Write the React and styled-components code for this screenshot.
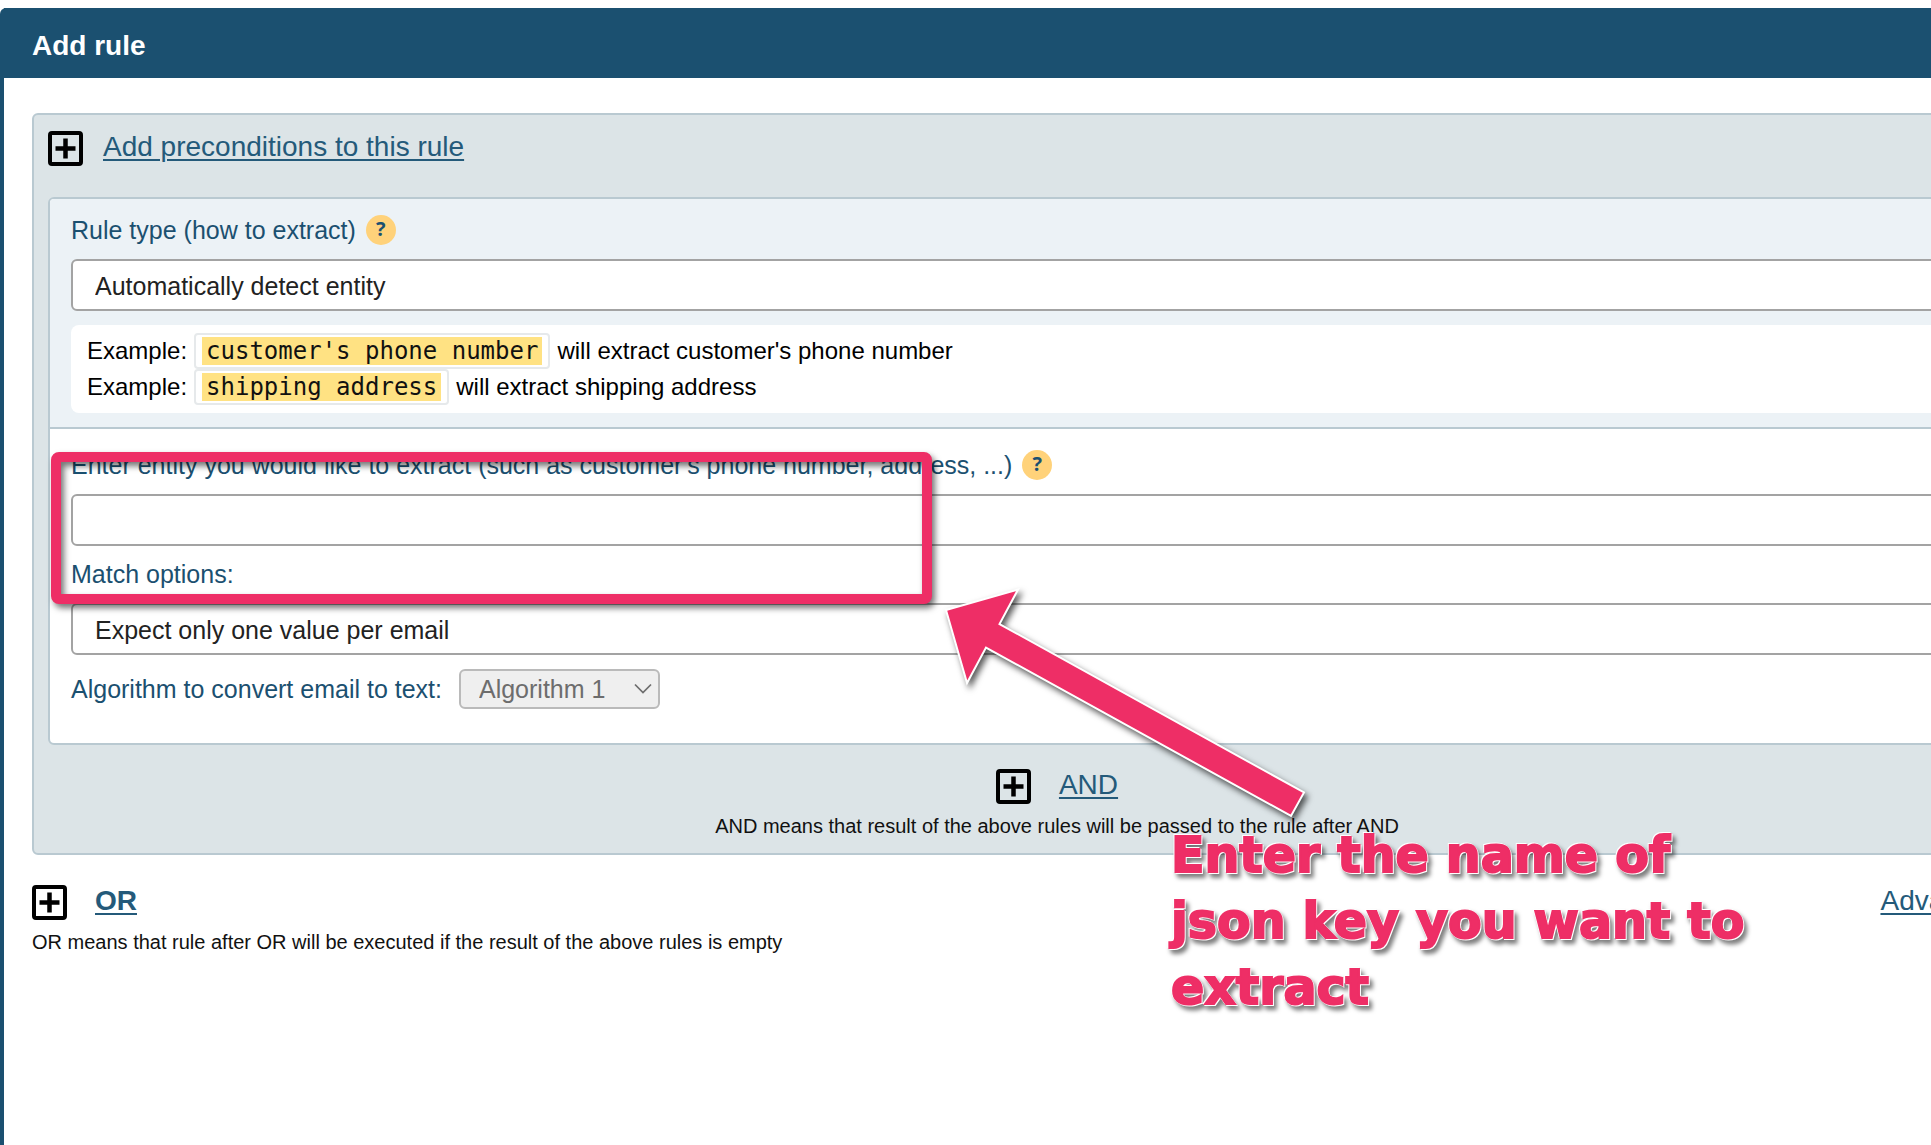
import React from 'react';
import styled, { createGlobalStyle } from 'styled-components';

const colors = {
  primary: '#1b5070',
  link: '#245a7a',
  border: '#b9c9d1',
  panel: '#dce4e7',
  section: '#ecf2f6',
  field: '#a3a3a3',
  badge: '#ffd27a',
  mark: '#ffe283',
  accent: '#ee2e66',
};

const GlobalStyle = createGlobalStyle`
  *, *::before, *::after {
    box-sizing: border-box;
  }

  body {
    margin: 0;
    background: #fff;
    color: #111;
    font-family: 'Liberation Sans', Arial, Helvetica, sans-serif;
    overflow: hidden;
  }
`;

const Page = styled.div`
  position: relative;
  min-height: 100vh;
  padding-top: 8px;
  display: flex;
  overflow: hidden;
`;

// the dialog runs past the right edge of the window
const Dialog = styled.main`
  flex: 1;
  margin-right: -183px;
  border-left: 4px solid ${colors.primary};
  border-top-left-radius: 6px;
`;

const Header = styled.header`
  display: flex;
  align-items: center;
  height: 70px;
  padding: 6px 28px 0;
  background: ${colors.primary};
`;

const Title = styled.h1`
  margin: 0;
  color: #fff;
  font-size: 28px;
  line-height: 32px;
`;

const Body = styled.div`
  padding: 35px 32px 35px 28px;
`;

const Group = styled.section`
  padding: 16px 14px 15px;
  background: ${colors.panel};
  border: 2px solid ${colors.border};
  border-radius: 6px;
`;

const ActionRow = styled.div`
  display: flex;
  align-items: flex-start;
  justify-content: ${(props) => (props.$center ? 'center' : 'flex-start')};
  gap: ${(props) => props.$gap || 28}px;
`;

const IconButton = styled.button`
  display: block;
  width: 35px;
  height: 35px;
  padding: 0;
  border: 0;
  background: none;
  color: #000;

  svg {
    display: block;
  }
`;

const Link = styled.a`
  color: ${colors.link};
  font-size: 28px;
  font-weight: ${(props) => (props.$bold ? 'bold' : 'normal')};
  line-height: 32px;
  text-decoration-thickness: 2px;
  text-underline-offset: 3px;
`;

const Hint = styled.p`
  margin: 10px 0 0;
  font-size: 20px;
  line-height: 24px;
  text-align: ${(props) => (props.$center ? 'center' : 'left')};
`;

const Rule = styled.div`
  margin: 31px 0 24px;
  background: #fff;
  border: 2px solid ${colors.border};
  border-radius: 6px;
  overflow: hidden;
`;

const RuleType = styled.div`
  padding: 15px 21px 14px;
  background: ${colors.section};
  border-bottom: 2px solid ${colors.border};
`;

const RuleOptions = styled.div`
  padding: 20px 21px 34px;
`;

const LabelRow = styled.div`
  display: flex;
  align-items: center;
  gap: 10px;
  height: 32px;
  margin-bottom: 13px;
`;

const Label = styled.label`
  color: ${colors.primary};
  font-size: 25px;
  line-height: 32px;
`;

const Help = styled.button`
  width: 30px;
  height: 30px;
  padding: 0 0 2px;
  border: 0;
  border-radius: 50%;
  background: ${colors.badge};
  color: ${colors.primary};
  font: bold 20px/28px 'Open Sans', sans-serif;
`;

const TextInput = styled.input`
  display: block;
  width: 100%;
  height: 52px;
  margin-bottom: 12px;
  padding: 0 22px;
  background: #fff;
  border: 2px solid ${colors.field};
  border-radius: 6px;
  font: 25px 'Liberation Sans', Arial, sans-serif;
`;

const SelectBox = styled.div`
  display: grid;
  align-items: center;

  > * {
    grid-area: 1 / 1;
  }

  svg {
    justify-self: end;
    margin-right: 8px;
    pointer-events: none;
  }
`;

const Select = styled.select`
  appearance: none;
  width: 100%;
  height: ${(props) => (props.$small ? 40 : 52)}px;
  padding: ${(props) => (props.$small ? '0 52px 0 18px' : '2px 22px 0')};
  background: #fff;
  border: 2px solid ${colors.field};
  border-radius: 6px;
  color: #222;
  font: 25px 'Liberation Sans', Arial, sans-serif;

  &:disabled {
    background: #efefef;
    border-color: #bababa;
    color: #6d6d6d;
    opacity: 1;
  }
`;

const Examples = styled.div`
  margin-top: 14px;
  padding: 8px 16px;
  background: #fff;
  border-radius: 8px;
`;

const Example = styled.div`
  display: flex;
  align-items: center;
  gap: 7px;
  height: 36px;
  color: #000;
  font-size: 24px;
`;

const Code = styled.code`
  padding: 2px 6px;
  border: 2px solid #e6e9eb;
  border-radius: 4px;
  font: 24px/28px 'DejaVu Sans Mono', monospace;

  mark {
    display: block;
    padding: 0 4px;
    background: ${colors.mark};
    color: #111;
  }
`;

const AlgorithmRow = styled.div`
  display: flex;
  align-items: center;
  gap: 17px;
  margin-top: 14px;
`;

const Footer = styled.footer`
  display: flex;
  align-items: flex-start;
  justify-content: space-between;
  margin-top: 30px;
  padding-right: 77px;
`;

const Highlight = styled.div`
  position: absolute;
  left: 51px;
  top: 452px;
  width: 881px;
  height: 152px;
  border: 10px solid ${colors.accent};
  border-radius: 8px;
  filter: drop-shadow(3px 4px 3px rgba(0, 0, 0, 0.55));
  pointer-events: none;
`;

const Arrow = styled.svg`
  position: absolute;
  left: 940px;
  top: 580px;
  overflow: visible;
  filter: drop-shadow(3px 4px 3px rgba(0, 0, 0, 0.65));
  pointer-events: none;
`;

const Callout = styled.p`
  position: absolute;
  left: 1171px;
  top: 823px;
  width: 620px;
  margin: 0;
  color: ${colors.accent};
  font: bold 49px/66px 'DejaVu Sans', Verdana, sans-serif;
  -webkit-text-stroke: 2px ${colors.accent};
  filter: drop-shadow(1px 1px 0 #fff) drop-shadow(-1px -1px 0 #fff)
    drop-shadow(3px 4px 2px rgba(0, 0, 0, 0.5));
`;

const PlusButton = ({ label }) => (
  <IconButton type="button" aria-label={label}>
    <svg width="35" height="35" viewBox="0 0 35 35" fill="none" stroke="currentColor">
      <rect x="2" y="2" width="31" height="31" rx="2" strokeWidth="4" />
      <path d="M17.5 7.5v20M7.5 17.5h20" strokeWidth="4.5" />
    </svg>
  </IconButton>
);

const Chevron = () => (
  <svg width="18" height="12" viewBox="0 0 18 12" fill="none" stroke="#6d6d6d" strokeWidth="1.75">
    <path d="M1 1.5l8 8 8-8" />
  </svg>
);

const examples = [
  { value: "customer's phone number", text: "will extract customer's phone number" },
  { value: 'shipping address', text: 'will extract shipping address' },
];

const App = () => (
  <>
    <GlobalStyle />
    <Page>
      <Dialog>
        <Header>
          <Title>Add rule</Title>
        </Header>
        <Body>
          <Group>
            <ActionRow $gap={20}>
              <PlusButton label="Add preconditions" />
              <Link href="#preconditions">Add preconditions to this rule</Link>
            </ActionRow>
            <Rule>
              <RuleType>
                <LabelRow>
                  <Label htmlFor="rule-type">Rule type (how to extract)</Label>
                  <Help type="button">?</Help>
                </LabelRow>
                <SelectBox>
                  <Select id="rule-type">
                    <option>Automatically detect entity</option>
                  </Select>
                  <Chevron />
                </SelectBox>
                <Examples>
                  {examples.map(({ value, text }) => (
                    <Example key={value}>
                      <span>Example:</span>
                      <Code>
                        <mark>{value}</mark>
                      </Code>
                      <span>{text}</span>
                    </Example>
                  ))}
                </Examples>
              </RuleType>
              <RuleOptions>
                <LabelRow>
                  <Label htmlFor="entity">
                    Enter entity you would like to extract (such as customer's phone number,
                    address, ...)
                  </Label>
                  <Help type="button">?</Help>
                </LabelRow>
                <TextInput id="entity" type="text" />
                <LabelRow>
                  <Label htmlFor="match">Match options:</Label>
                </LabelRow>
                <SelectBox>
                  <Select id="match">
                    <option>Expect only one value per email</option>
                  </Select>
                  <Chevron />
                </SelectBox>
                <AlgorithmRow>
                  <Label htmlFor="algorithm">Algorithm to convert email to text:</Label>
                  <SelectBox>
                    <Select id="algorithm" $small disabled>
                      <option>Algorithm 1</option>
                    </Select>
                    <Chevron />
                  </SelectBox>
                </AlgorithmRow>
              </RuleOptions>
            </Rule>
            <ActionRow $center>
              <PlusButton label="Add AND rule" />
              <Link href="#and">AND</Link>
            </ActionRow>
            <Hint $center>
              AND means that result of the above rules will be passed to the rule after AND
            </Hint>
          </Group>
          <Footer>
            <div>
              <ActionRow>
                <PlusButton label="Add OR rule" />
                <Link href="#or" $bold>
                  OR
                </Link>
              </ActionRow>
              <Hint>
                OR means that rule after OR will be executed if the result of the above rules is
                empty
              </Hint>
            </div>
            <Link href="#advanced">Advanced</Link>
          </Footer>
        </Body>
      </Dialog>
      <Highlight />
      <Arrow width="370" height="240" viewBox="940 580 370 240">
        <path
          d="M946 610L1018 589.5L999.5 624L1304 792.5L1291 816L986 647.5L967 683Z"
          fill={colors.accent}
          stroke="#fff"
          strokeWidth="2"
          strokeMiterlimit="10"
        />
      </Arrow>
      <Callout>
        Enter the name of
        <br />
        json key you want to
        <br />
        extract
      </Callout>
    </Page>
  </>
);

export default App;
